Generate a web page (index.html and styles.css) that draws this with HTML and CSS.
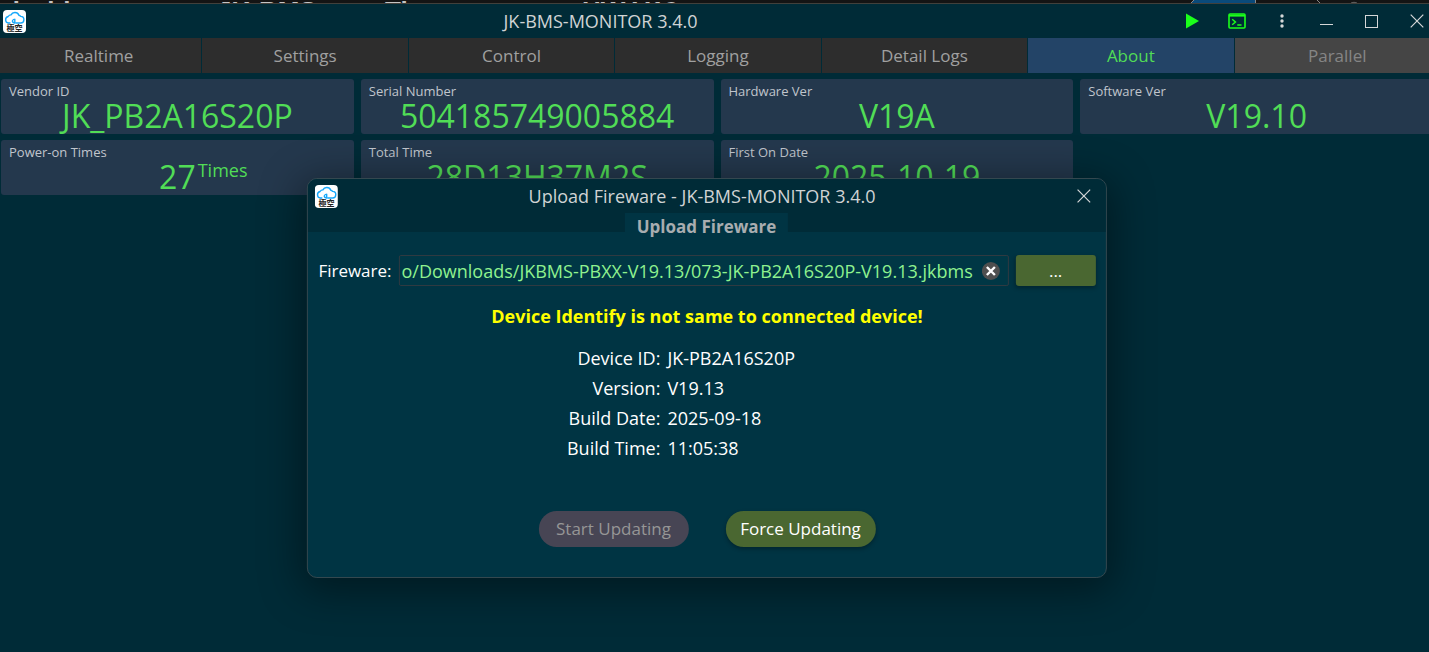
FILE: index.html
```html
<!doctype html>
<html lang="en">
    <head>
        <title>JK-BMS-MONITOR 3.4.0</title>
        <meta charset="UTF-8">
        <meta name="viewport" content="width=device-width, initial-scale=1">
        <link rel="stylesheet" href="styles.css">
    </head>

    <body>
        <svg class="defs" width="0" height="0" aria-hidden="true">
            <symbol id="logo" viewBox="0 0 23 23">
                <rect width="23" height="23" rx="4" fill="#fff"/>
                <path d="M7 13H5.6a3.3 3.3 0 0 1-.4-6.5 3.2 3.2 0 0 1 2.8-1.6 4.3 4.3 0 0 1 7.9.3 3.3 3.3 0 0 1 1.8 1.2 3.3 3.3 0 0 1-.2 6.6H13M11.4 13c-2.2-.4-2.8-2.4-.8-3.5M11.8 13V9.2" fill="none" stroke="#16a8fb" stroke-width="1.4" stroke-linecap="round"/>
                <text class="logo-text" x="11.5" y="20.5" text-anchor="middle">極空</text>
            </symbol>
            <symbol id="cross" viewBox="0 0 14 14">
                <path d="M.7.7l12.6 12.6M13.3.7L.7 13.3" fill="none" stroke="#d5d7d8" stroke-width="1.2"/>
            </symbol>
        </svg>

        <!--Window behind-->
        <div class="behind" aria-hidden="true">
            <span>d with</span>
            <span>JK-BMS</span>
            <span>Ti</span>
            <span>HW V19</span>
            <svg width="240" height="3">
                <path d="M5 0h61v3H2z" fill="#0a4a7a"/>
                <path d="M5 0L2 3M66.5 0v3M128 0l3 3" fill="none" stroke="#8a8a8a"/>
                <path d="M162 3q3-1.500 6 0" fill="none" stroke="#666"/>
            </svg>
        </div>

        <!--Title bar-->
        <header class="titlebar">
            <svg class="logo"><use href="#logo"/></svg>
            <h1 class="title">JK-BMS-MONITOR 3.4.0</h1>
            <div class="actions">
                <button aria-label="Run"><svg width="16" height="18"><path d="M2 1.500l13 7.500-13 7.500z" fill="#1bff1b"/></svg></button>
                <button aria-label="Terminal"><svg width="18" height="16" fill="none" stroke="#1bff1b"><rect x="1" y="1" width="16" height="14" rx="1" stroke-width="1.6"/><path d="M1 2.600h16" stroke-width="2"/><path d="M4.200 6.300l3.200 2.700-3.200 2.700M9.300 12h4.200" stroke-width="1.5"/></svg></button>
                <button aria-label="More"><svg width="4" height="14" fill="#d5d7d8"><circle cx="2" cy="2" r="1.7"/><circle cx="2" cy="7" r="1.7"/><circle cx="2" cy="12" r="1.7"/></svg></button>
                <button aria-label="Minimize"><svg width="13" height="14"><path d="M0 10.500h13" stroke="#d5d7d8"/></svg></button>
                <button aria-label="Maximize"><svg width="13" height="13"><rect x=".5" y=".5" width="12" height="12" fill="none" stroke="#d5d7d8"/></svg></button>
                <button aria-label="Close"><svg width="14" height="14"><use href="#cross"/></svg></button>
            </div>
        </header>

        <!--Tabs-->
        <nav class="tabs">
            <button>Realtime</button>
            <button>Settings</button>
            <button>Control</button>
            <button>Logging</button>
            <button>Detail Logs</button>
            <button class="active">About</button>
            <button disabled>Parallel</button>
        </nav>

        <!--Device info-->
        <main class="cards">
            <section class="card">
                <h2>Vendor ID</h2>
                <p>JK_PB2A16S20P</p>
            </section>
            <section class="card">
                <h2>Serial Number</h2>
                <p>504185749005884</p>
            </section>
            <section class="card">
                <h2>Hardware Ver</h2>
                <p>V19A</p>
            </section>
            <section class="card">
                <h2>Software Ver</h2>
                <p>V19.10</p>
            </section>
            <section class="card">
                <h2>Power-on Times</h2>
                <p>27<span class="unit">Times</span></p>
            </section>
            <section class="card">
                <h2>Total Time</h2>
                <p>28D13H37M2S</p>
            </section>
            <section class="card">
                <h2>First On Date</h2>
                <p>2025-10-19</p>
            </section>
        </main>

        <!--Upload dialog-->
        <div class="dialog" role="dialog" aria-labelledby="dialog-title">
            <div class="dialog-head">
                <div class="dialog-bar">
                    <svg class="logo"><use href="#logo"/></svg>
                    <h2 class="title" id="dialog-title">Upload Fireware - JK-BMS-MONITOR 3.4.0</h2>
                    <button class="close" aria-label="Close"><svg width="14" height="14"><use href="#cross"/></svg></button>
                </div>
                <h3 class="dialog-tab">Upload Fireware</h3>
            </div>
            <div class="dialog-body">
                <div class="file-row">
                    <label for="file">Fireware:</label>
                    <div class="file-box">
                        <input id="file" type="text" value="o/Downloads/JKBMS-PBXX-V19.13/073-JK-PB2A16S20P-V19.13.jkbms">
                        <button class="clear" aria-label="Clear"><svg width="18" height="18"><circle cx="9" cy="9" r="9" fill="#4f4f4f"/><path d="M5 5l8 8M13 5l-8 8" stroke="#fff" stroke-width="2.4"/></svg></button>
                    </div>
                    <button class="browse">...</button>
                </div>
                <p class="warning">Device Identify is not same to connected device!</p>
                <dl class="info">
                    <dt>Device ID:</dt><dd>JK-PB2A16S20P</dd>
                    <dt>Version:</dt><dd>V19.13</dd>
                    <dt>Build Date:</dt><dd>2025-09-18</dd>
                    <dt>Build Time:</dt><dd>11:05:38</dd>
                </dl>
                <div class="buttons">
                    <button disabled>Start Updating</button>
                    <button>Force Updating</button>
                </div>
            </div>
        </div>
    </body>
</html>
```
FILE: styles.css
```css
*{
    box-sizing: border-box;
}

body{
    margin: 0;
    min-height: 100vh;
    overflow: hidden;
    position: relative;
    font-family: "Open Sans", "Noto Sans", sans-serif;
    font-size: 17px;
    line-height: 24px;
    color: white;
    background: #002b37;
}

h1, h2, h3, p, dl, dd{
    margin: 0;
    font-weight: normal;
}

button{
    font: inherit;
    color: inherit;
    border: 0;
    padding: 0;
    background: none;
}

button svg{
    display: block;
    margin: 0 auto;
}

.defs{
    position: absolute;
}

/* Window behind, only its last rows show */
.behind{
    display: grid;
    grid-template-columns: 213px 168px 197px 1fr 240px;
    height: 4px;
    padding-left: 4px;
    overflow: hidden;
    font: bold 26px/22px "Liberation Sans", sans-serif;
    color: #c4c4c4;
    background: #141414;
    border-bottom: 1px solid #41403b;
}

/* Title bar */
.titlebar{
    display: grid;
    grid-template-columns: 240px 1fr 260px;
    align-items: center;
    height: 34px;
    padding-left: 3px;
}

.logo{
    width: 23px;
    height: 23px;
}

.logo-text{
    font: bold 8px "Noto Sans CJK TC", sans-serif;
    fill: #222;
}

.title{
    font-size: 18px;
    text-align: center;
    color: #d0d3d4;
}

.titlebar .title{
    padding-right: 211px;
}

.actions{
    display: flex;
    justify-content: flex-end;
    margin-right: -10px;
}

.actions button{
    width: 45px;
    height: 34px;
}

/* Tabs */
.tabs{
    display: flex;
    gap: 1px;
    margin: 0 -11px 0 -4px;
}

.tabs button{
    flex: 1;
    height: 35px;
    color: #a0a0a0;
    background: #2d2d2d;
}

.tabs .active{
    color: #51dd56;
    background: #234467;
}

.tabs button:disabled{
    color: #858585;
    background: #454545;
}

/* Cards */
.cards{
    display: grid;
    grid-template-columns: repeat(4, 1fr);
    gap: 6px 7px;
    margin: 6px -4px 0 1px;
}

.card{
    height: 55px;
    padding: 3px 8px 0;
    border-radius: 3px;
    background: #24384d;
}

.card h2{
    font-size: 13px;
    line-height: 18px;
    color: #c0c5cc;
}

.card p{
    font-size: 32px;
    line-height: 32px;
    text-align: center;
    color: #51dd56;
}

/* takes no room, so that the number stays centred */
.card .unit{
    display: inline-block;
    width: 0;
    font-size: 18px;
    line-height: 1;
    vertical-align: 12px;
    text-indent: 2px;
}

/* Dialog */
.dialog{
    position: absolute;
    top: 178px;
    left: 50%;
    width: 56%;
    min-width: 720px;
    transform: translateX(-51%);
    border: 1px solid #34484f;
    border-radius: 10px;
    background: #003443;
    box-shadow: 0 8px 40px 6px rgba(0,0,0,0.4);
    overflow: hidden;
}

.dialog-head{
    height: 53px;
    background: #002b37;
}

.dialog-bar{
    display: grid;
    grid-template-columns: 40px 1fr 40px;
    align-items: center;
    height: 34px;
    padding: 0 2px 0 7px;
}

.dialog-bar .title{
    padding-right: 14px;
}

.dialog-bar .close{
    justify-self: center;
}

.dialog-tab{
    width: fit-content;
    height: 19px;
    margin: 0 auto;
    padding: 2px 12px 0;
    font-size: 17px;
    font-weight: bold;
    color: #a8adb0;
    background: #003443;
}

.dialog-body{
    padding: 23px 10px 30px 11px;
}

.file-row{
    display: flex;
    align-items: center;
    gap: 7px;
}

.file-box{
    flex: 1;
    display: flex;
    align-items: center;
    height: 31px;
    padding-right: 8px;
    border: 1px solid #2f3a41;
    border-radius: 2px;
    background: #003745;
}

.file-box input{
    flex: 1;
    min-width: 0;
    border: 0;
    outline: 0;
    padding: 0 2px;
    font: inherit;
    font-size: 18px;
    color: #8ff28f;
    background: none;
}

.browse{
    width: 80px;
    height: 31px;
    border-radius: 3px;
    background: #4a6731;
    box-shadow: 0 2px 4px rgba(0,0,0,0.3);
}

.warning{
    margin-top: 18px;
    text-align: center;
    font-size: 18px;
    font-weight: bold;
    color: #ffff00;
}

.info{
    display: grid;
    grid-template-columns: 342px 1fr;
    column-gap: 7px;
    margin-top: 15px;
    font-size: 18px;
    line-height: 30px;
}

.info dt{
    text-align: right;
}

.buttons{
    display: flex;
    justify-content: center;
    gap: 37px;
    margin-top: 48px;
}

.buttons button{
    width: 150px;
    height: 36px;
    border-radius: 18px;
    background: #4a6731;
    box-shadow: 0 2px 4px rgba(0,0,0,0.3);
}

.buttons button:disabled{
    color: #969696;
    background: #474554;
    box-shadow: none;
}
```
